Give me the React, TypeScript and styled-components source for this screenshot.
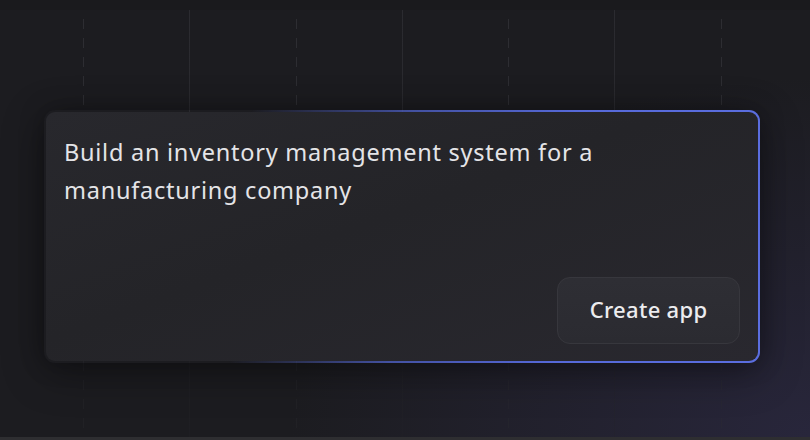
import React from 'react'
import styled, { createGlobalStyle } from 'styled-components'

const GlobalStyle = createGlobalStyle`
  html, body {
    margin: 0;
    padding: 0;
    background: #1b1b1f;
  }
  * {
    box-sizing: border-box;
  }
`

const Page = styled.div`
  position: relative;
  width: 810px;
  height: 440px;
  overflow: hidden;
  background:
    radial-gradient(ellipse 520px 360px at 100% 100%, rgba(52, 48, 86, 0.5), rgba(52, 48, 86, 0) 100%),
    #1c1c20;
  font-family: 'Noto Sans', 'Open Sans', sans-serif;
  border-top: 10px solid #1a1a1d;
  border-bottom: 3px solid #2e2e31;
  display: flex;
  flex-direction: column;
`

// decorative column guides, sit behind the card
const Guides = styled.div`
  position: absolute;
  inset: 0;
  display: flex;
  padding-left: 30px;
  pointer-events: none;
  mask-image: linear-gradient(to bottom, #000 0%, #000 30%, rgba(0, 0, 0, 0.35) 80%, rgba(0, 0, 0, 0.3) 100%);
`

const Guide = styled.div<{ $dashed?: boolean }>`
  flex: 0 0 106.25px;
  height: 100%;
  background-image: ${p =>
    p.$dashed
      ? 'repeating-linear-gradient(to bottom, #2d2d32 0 10px, transparent 10px 19px)'
      : 'linear-gradient(to bottom, #2b2b30, #252529)'};
  background-size: 1px 100%;
  background-repeat: no-repeat;
  background-position: ${p => (p.$dashed ? '53px 9px' : '53px 0')};
`

const Card = styled.div`
  position: relative;
  margin: 100px 0 0 44px;
  width: 716px;
  height: 253px;
  border-radius: 11px;
  border: 2px solid transparent;
  background:
    linear-gradient(160deg, #28282d 0%, #242428 45%, #29282f 100%) padding-box,
    linear-gradient(95deg, rgba(84, 104, 216, 0) 28%, rgba(84, 104, 216, 0.7) 50%, #5669d8 72%, #5b6ee0 100%) border-box;
  box-shadow: 0 10px 40px rgba(0, 0, 0, 0.35), 0 0 24px rgba(0, 0, 0, 0.25);
  display: flex;
  flex-direction: column;
  justify-content: space-between;
  padding: 21px 18px 17px 18px;
`

const Prompt = styled.p`
  margin: 0;
  color: #e4e4e7;
  font-size: 23.5px;
  line-height: 38px;
  letter-spacing: 0.75px;
  max-width: 640px;
`

const Footer = styled.div`
  display: flex;
  justify-content: flex-end;
`

const CreateButton = styled.button`
  width: 183px;
  height: 67px;
  padding: 0 0 3px;
  border-radius: 13px;
  border: 1px solid #37373d;
  background: linear-gradient(180deg, #2e2e34, #2b2b31);
  color: #ececef;
  font-family: inherit;
  font-size: 22px;
  font-weight: 500;
  letter-spacing: 0.3px;
  cursor: pointer;
`

const App = () => {
  return (
    <>
      <GlobalStyle />
      <Page>
        <Guides>
          <Guide $dashed />
          <Guide />
          <Guide $dashed />
          <Guide />
          <Guide $dashed />
          <Guide />
          <Guide $dashed />
        </Guides>
        <Card>
          <Prompt>Build an inventory management system for a manufacturing company</Prompt>
          <Footer>
            <CreateButton>Create app</CreateButton>
          </Footer>
        </Card>
      </Page>
    </>
  )
}

export default App
